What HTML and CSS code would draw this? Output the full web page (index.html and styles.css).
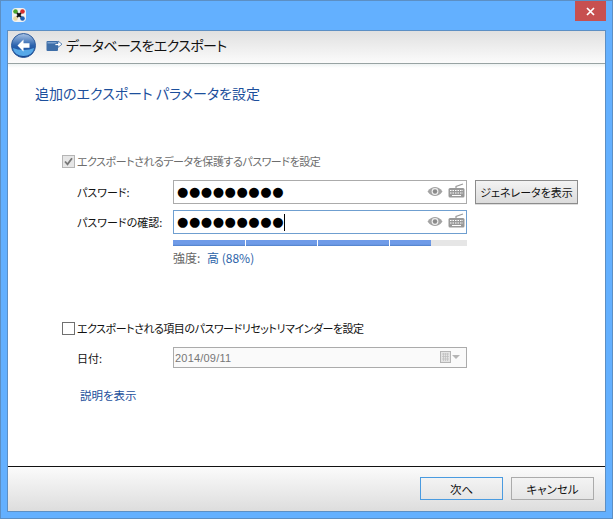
FILE: index.html
```html
<!DOCTYPE html>
<html lang="ja">
<head>
<meta charset="utf-8">
<title>データベースをエクスポート</title>
<link rel="stylesheet" href="styles.css">
</head>
<body>
<div class="window">
  <div class="titlebar">
    <svg class="app-icon" width="16" height="16" viewBox="0 0 16 16">
      <rect x="1" y="1" width="14" height="14" rx="4" fill="#f2f2f2"/>
      <circle cx="4.500" cy="4.500" r="2.300" fill="#4aa52e"/>
      <circle cx="11.500" cy="4.500" r="2.300" fill="#d62f2f"/>
      <circle cx="4.500" cy="11.500" r="2.300" fill="#ecd9a0"/>
      <circle cx="11.500" cy="11.500" r="2.300" fill="#1c5fb4"/>
      <path d="M6 6l4 4M10 6l-4 4" stroke="#111" stroke-width="2"/>
    </svg>
    <div class="close">
      <svg width="9" height="9" viewBox="0 0 9 9"><path d="M1 1l7 7M8 1l-7 7" stroke="#fff" stroke-width="1.700"/></svg>
    </div>
  </div>
  <div class="panel">
    <header class="head">
      <svg class="back" width="25" height="25" viewBox="0 0 25 25">
        <defs>
          <linearGradient id="orb" x1="0" y1="0" x2="0" y2="1">
            <stop offset="0" stop-color="#a9c4e6"/>
            <stop offset="0.5" stop-color="#2a62ae"/>
            <stop offset="1" stop-color="#0f3f8c"/>
          </linearGradient>
        </defs>
        <circle cx="12.500" cy="12.500" r="12" fill="url(#orb)" stroke="#2f5c9c"/>
        <path d="M2 15a10.500 8 0 0 0 21 0a14 6 0 0 1-21 0z" fill="#56a8e8"/>
        <path d="M12.500 6.500l-6 6 6 6v-3.800h6v-4.400h-6z" fill="#fff"/>
      </svg>
      <svg class="export" width="16" height="14" viewBox="0 0 16 14">
        <rect x="0.500" y="3" width="11.500" height="10" rx="1" fill="#3e6ea8"/>
        <rect x="1.500" y="4" width="9" height="1.500" fill="#7ea3cf"/>
        <path d="M9 5.500h3V3l4 3.200-4 3.200V7.600H9z" fill="#fff" stroke="#3e6ea8" stroke-width="0.800"/>
      </svg>
      <h1 class="head-title">データベースをエクスポート</h1>
    </header>
    <main class="body">
      <h2 class="section-title">追加のエクスポート パラメータを設定</h2>

      <div class="check-row disabled">
        <span class="check check-on">
          <svg width="9" height="9" viewBox="0 0 9 9"><path d="M1 4.500l2.500 2.800L8 1.200" fill="none" stroke="#777" stroke-width="1.800"/></svg>
        </span>
        <span>エクスポートされるデータを保護するパスワードを設定</span>
      </div>

      <div class="form-row first">
        <label class="label">パスワード:</label>
        <div class="input">
          <span class="dots">●●●●●●●●●</span>
          <svg class="eye" width="16" height="11" viewBox="0 0 16 11"><path d="M0.500 5.500C3 2 5.500 1 8 1S13 2 15.500 5.500C13 9 10.500 10 8 10S3 9 .5 5.500z" fill="#a3a3a3"/><circle cx="8" cy="5.500" r="3.400" fill="#eee"/><circle cx="8" cy="5.500" r="2.200" fill="#8a8a8a"/></svg>
          <svg class="kbd" width="17" height="15" viewBox="0 0 17 15"><path d="M8 5V3.500l7-2.500" fill="none" stroke="#9a9a9a" stroke-width="1.200"/><rect x="0.500" y="5" width="16" height="9.500" rx="1.500" fill="#9a9a9a"/><path d="M2 7.500h13M2 10h13" stroke="#fff" stroke-dasharray="1.500 1"/><path d="M4 12.500h9" stroke="#fff"/></svg>
        </div>
        <button class="btn gen" type="button">ジェネレータを表示</button>
      </div>

      <div class="form-row second">
        <label class="label">パスワードの確認:</label>
        <div class="input focused">
          <span class="dots">●●●●●●●●●</span><span class="caret"></span>
          <svg class="eye" width="16" height="11" viewBox="0 0 16 11"><path d="M0.500 5.500C3 2 5.500 1 8 1S13 2 15.500 5.500C13 9 10.500 10 8 10S3 9 .5 5.500z" fill="#a3a3a3"/><circle cx="8" cy="5.500" r="3.400" fill="#eee"/><circle cx="8" cy="5.500" r="2.200" fill="#8a8a8a"/></svg>
          <svg class="kbd" width="17" height="15" viewBox="0 0 17 15"><path d="M8 5V3.500l7-2.500" fill="none" stroke="#9a9a9a" stroke-width="1.200"/><rect x="0.500" y="5" width="16" height="9.500" rx="1.500" fill="#9a9a9a"/><path d="M2 7.500h13M2 10h13" stroke="#fff" stroke-dasharray="1.500 1"/><path d="M4 12.500h9" stroke="#fff"/></svg>
        </div>
      </div>

      <div class="meter">
        <span class="seg seg-full"></span>
        <span class="seg seg-full"></span>
        <span class="seg seg-full"></span>
        <span class="seg seg-part"></span>
      </div>
      <div class="strength">強度: <span class="strength-val">高 (88%)</span></div>

      <div class="check-row reminder">
        <span class="check"></span>
        <span>エクスポートされる項目のパスワードリセットリマインダーを設定</span>
      </div>

      <div class="form-row date-row">
        <label class="label">日付:</label>
        <div class="input date">
          <span class="date-val">2014/09/11</span>
          <svg width="20" height="13" viewBox="0 0 20 13"><rect x="0.500" y="0.500" width="10" height="11" fill="#e4e4e4" stroke="#b5b5b5"/><path d="M2 3h7M2 5.500h7M2 8h7M3.500 2v8M5.500 2v8M7.500 2v8" stroke="#bdbdbd" stroke-width="0.700"/><path d="M12 4h8l-4 4z" fill="#b5b5b5"/></svg>
        </div>
      </div>

      <a class="link" href="#">説明を表示</a>
    </main>
    <footer class="foot">
      <button class="btn flat primary" type="button">次へ</button>
      <button class="btn flat" type="button">キャンセル</button>
    </footer>
  </div>
</div>
</body>
</html>
```
FILE: styles.css
```css
* { box-sizing: border-box; }
html, body { margin: 0; padding: 0; }
body {
  width: 613px;
  height: 519px;
  overflow: hidden;
  font-family: "Noto Sans CJK JP", "Noto Sans", sans-serif;
  font-size: 12px;
  font-feature-settings: "palt";
  color: #111;
}
.window {
  width: 613px;
  height: 519px;
  display: flex;
  flex-direction: column;
  background: #63b0ff;
  border: 1px solid #5c8fc4;
  padding: 0 6px 6px;
}
.titlebar {
  height: 29px;
  flex: none;
  display: flex;
  justify-content: space-between;
  align-items: flex-start;
}
.app-icon { margin: 6px 0 0 4px; }
.close {
  width: 31px;
  height: 20px;
  background: #c75050;
  display: flex;
  align-items: center;
  justify-content: center;
}
.panel {
  flex: 1;
  display: flex;
  flex-direction: column;
  background: #fff;
  border: 1px solid #5c8fc4;
  min-height: 0;
}
.head {
  height: 33px;
  flex: none;
  display: flex;
  align-items: center;
  padding: 0 0 4px 3px;
  background: linear-gradient(#e0e0e0, #fbfbfb);
  border-bottom: 1px solid #98a3a3;
}
.back { flex: none; }
.export { margin-left: 10px; flex: none; }
.head-title {
  margin: 0 0 0 4px;
  font-size: 14px;
  font-weight: 400;
  line-height: 20px;
  letter-spacing: -0.6px;
}
.body {
  flex: 1;
  padding: 0 0 0 27px;
  min-height: 0;
  background: linear-gradient(#eef3f3, #fff 4px);
}
.section-title {
  margin: 19px 0 0;
  font-size: 14px;
  font-weight: 400;
  line-height: 20px;
  color: #1c4f9c;
}
.check-row {
  display: flex;
  align-items: center;
  gap: 2px;
  height: 16px;
  margin-left: 27px;
  font-size: 11px;
  letter-spacing: -0.47px;
  line-height: 16px;
}
.check-row.disabled { margin-top: 50px; color: #6d6d6d; }
.check-row.reminder { margin-top: 54px; }
.check {
  width: 13px;
  height: 13px;
  flex: none;
  border: 1px solid #707070;
  background: #fff;
  display: flex;
  align-items: center;
  justify-content: center;
}
.check-on { border-color: #b5b5b5; background: #e6e6e6; }
.form-row {
  display: flex;
  align-items: center;
  padding-left: 42px;
}
.form-row.first { margin-top: 11px; }
.form-row.second { margin-top: 6px; }
.form-row.date-row { margin-top: 11px; }
.label { width: 96px; flex: none; font-size: 11px; color: #111; }
.input {
  width: 294px;
  height: 24px;
  flex: none;
  display: flex;
  align-items: center;
  padding: 0 1px 0 3px;
  border: 1px solid #ababab;
  background: #fff;
}
.input.focused { border-color: #6f9fd0; }
.dots {
  font-family: "DejaVu Sans", sans-serif;
  font-size: 13px;
  letter-spacing: 0.55px;
  line-height: 20px;
  color: #000;
}
.caret {
  width: 1px;
  height: 17px;
  background: #000;
  flex: none;
}
.eye { margin: 0 0 1px auto; flex: none; }
.kbd { margin: 0 0 4px 5px; flex: none; }
.btn {
  font-family: inherit;
  font-size: 11.500px;
  font-feature-settings: inherit;
  color: #111;
  padding: 0;
}
.gen {
  width: 103px;
  height: 24px;
  margin-left: 8px;
  font-size: 11px;
  border: 1px solid #8c8c8c;
  background: linear-gradient(#f3f3f3, #dcdcdc);
  box-shadow: 0 1px 0 #ddd;
}
.meter {
  width: 294px;
  height: 6px;
  margin: 6px 0 0 138px;
  display: flex;
  gap: 1px;
  background: #e6e6e6;
}
.seg {
  height: 6px;
  background: linear-gradient(#6f9be8 70%, #4f7fc8);
  box-shadow: 1px 0 0 #fff;
}
.seg-full { width: 71px; }
.seg-full:first-child { width: 72px; }
.seg-part { width: 41px; box-shadow: none; }
.strength {
  margin: 4px 0 0 138px;
  line-height: 16px;
  color: #666;
}
.strength-val { margin-left: 4px; color: #2b62a8; }
.input.date {
  height: 21px;
  padding: 0 6px 0 1px;
  justify-content: space-between;
  background: #fafafa;
}
.date-val {
  font-family: "Liberation Sans", sans-serif;
  font-size: 11px;
  letter-spacing: 0.2px;
  color: #777;
}
.link {
  display: block;
  margin: 19px 0 0 45px;
  font-size: 11.500px;
  line-height: 16px;
  color: #1c4f9c;
  text-decoration: none;
}
.foot {
  height: 45px;
  flex: none;
  display: flex;
  justify-content: flex-end;
  align-items: flex-start;
  gap: 8px;
  padding: 10px 11px 0 0;
  border-top: 1px solid #111;
  background: linear-gradient(#fbfbfb, #dddddd);
}
.flat {
  width: 83px;
  height: 23px;
  border: 1px solid #ababab;
  background: transparent;
}
.flat.primary { border-color: #4a9be0; }
```
